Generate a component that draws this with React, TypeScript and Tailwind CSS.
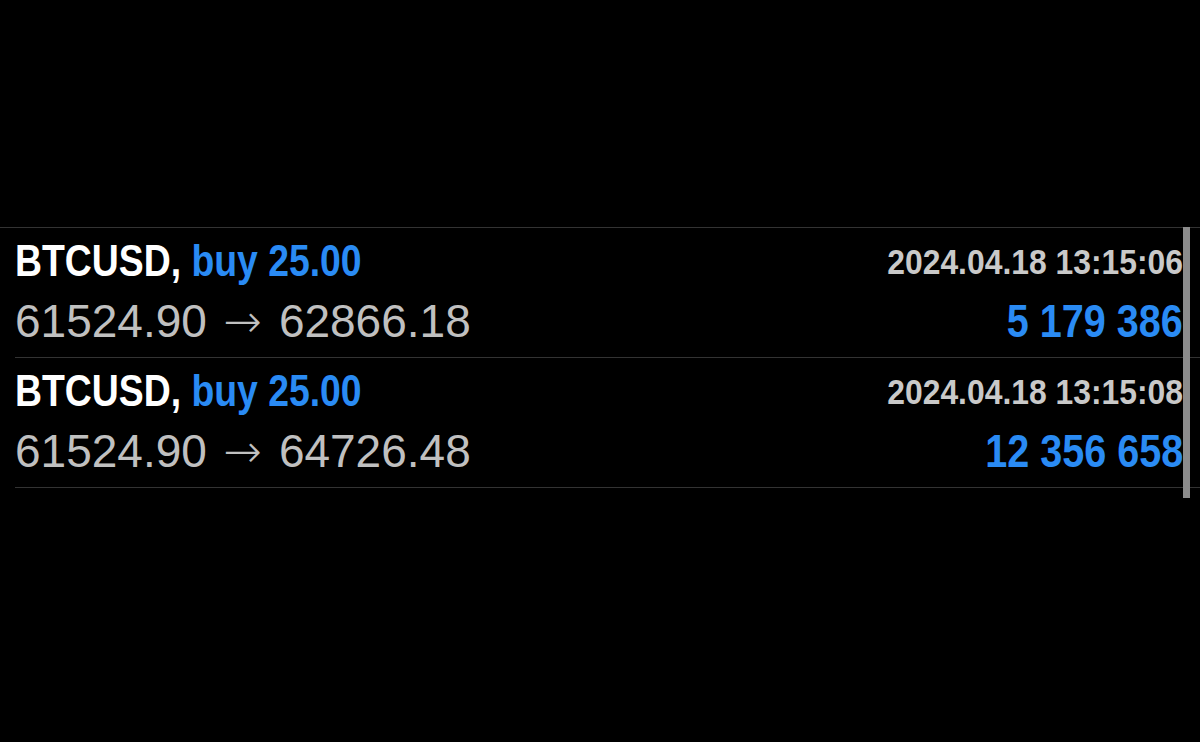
const trades = [
  { symbol: "BTCUSD", side: "buy 25.00", open: "61524.90", close: "62866.18", time: "2024.04.18 13:15:06", profit: "5 179 386" },
  { symbol: "BTCUSD", side: "buy 25.00", open: "61524.90", close: "64726.48", time: "2024.04.18 13:15:08", profit: "12 356 658" },
];

// condensed bold look (no narrow face installed, so squeeze horizontally)
const bold = "inline-block font-['Liberation_Sans',Arial,sans-serif] font-bold whitespace-pre";

export default function App() {
  return (
    <div className="relative h-[742px] w-[1200px] overflow-hidden bg-black pt-[227px]">
      <div className="border-t border-[#333333] pl-[15px]">
        {trades.map((t, i) => (
          <div key={i} className="h-[130px] border-b border-[#333333] pr-[17px] pt-[3px]">
            <div className="flex h-[60px] items-baseline justify-between leading-[60px]">
              <span className={`${bold} origin-left scale-x-[0.83] text-[45px]`}>
                <span className="text-white">{t.symbol},</span>{" "}
                <span className="text-[#2a8bf4]">{t.side}</span>
              </span>
              <span className={`${bold} relative -top-[2px] origin-right scale-x-[0.91] text-[35px] text-[#c9c9c9]`}>
                {t.time}
              </span>
            </div>
            <div className="flex items-baseline justify-between leading-[60px]">
              <span className="font-['Liberation_Sans',Arial,sans-serif] text-[46px] text-[#c0c0c0]">
                {t.open}
                <span className="mx-[14px] inline-block w-[44px] text-center font-['DejaVu_Sans',sans-serif] font-light">→</span>
                {t.close}
              </span>
              <span className={`${bold} origin-right scale-x-[0.86] text-[46px] text-[#2a8bf4]`}>
                {t.profit}
              </span>
            </div>
          </div>
        ))}
      </div>
      {/* scroll indicator */}
      <div className="absolute left-[1183px] top-[227px] h-[271px] w-[7px] bg-[#8c8c8c]" />
    </div>
  );
}
